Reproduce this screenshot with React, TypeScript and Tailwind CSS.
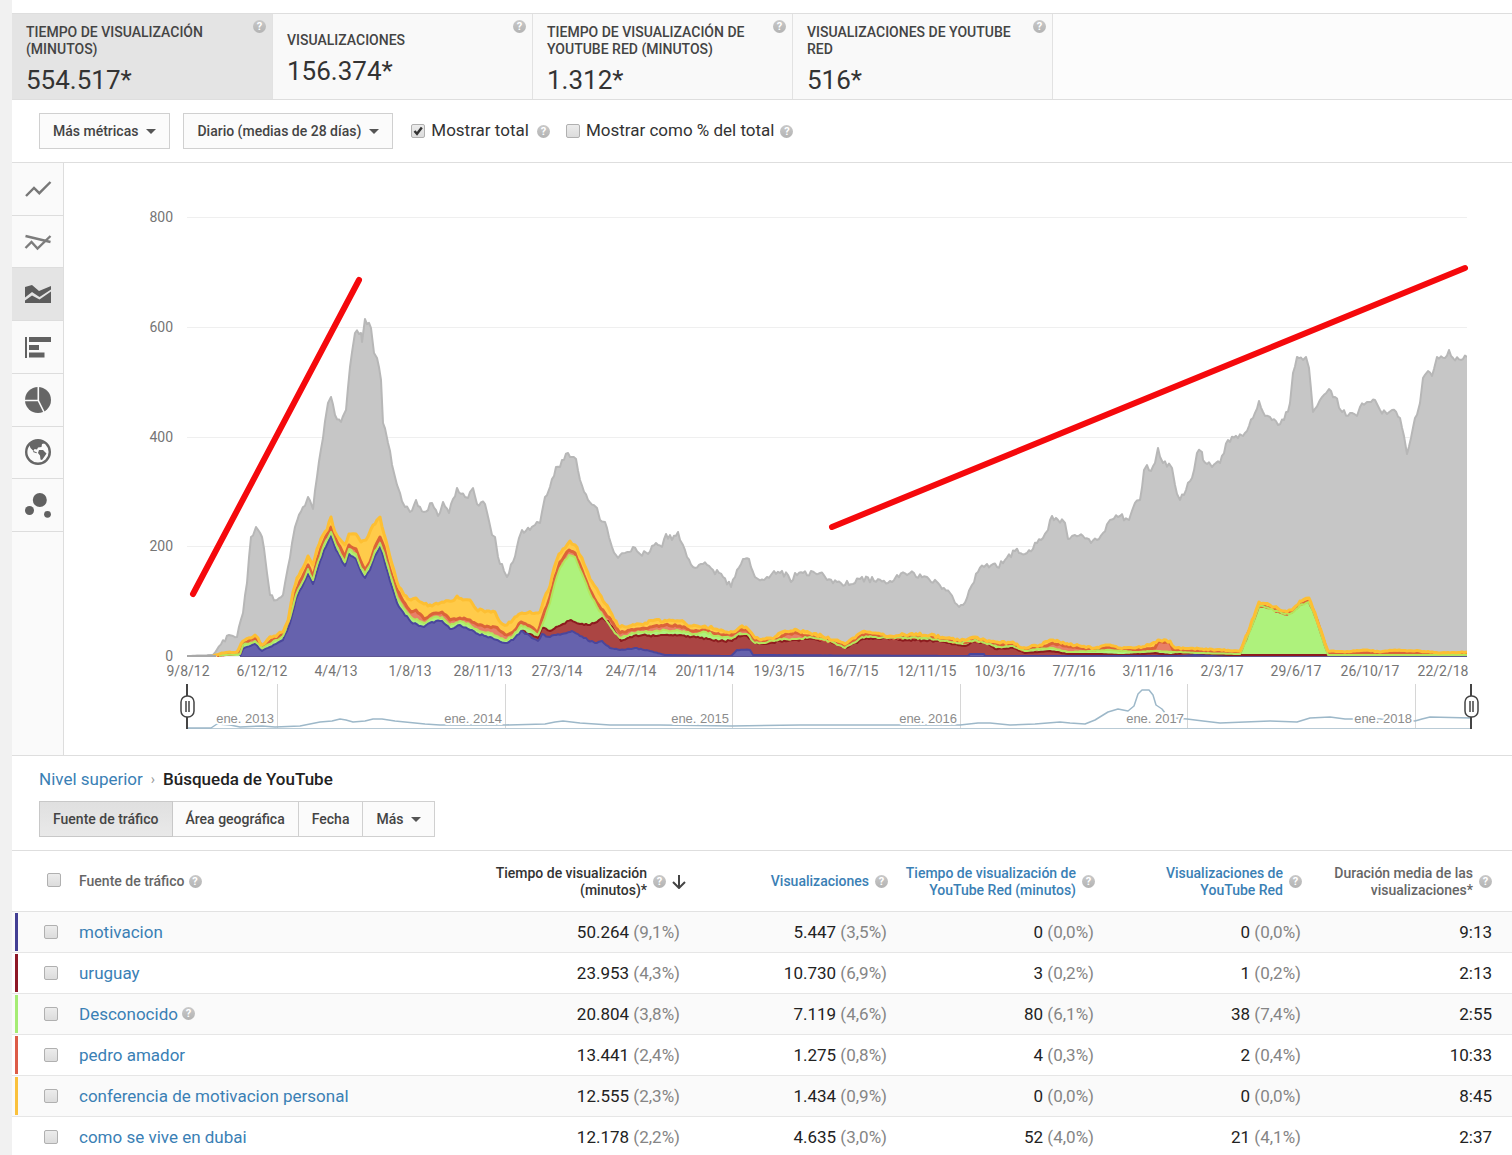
import React from "react";

type Point = [number, number];

const BASE = 656;

function parse(text: string): Point[] {
  return text
    .trim()
    .split(/\s+/)
    .map((pair) => pair.split(",").map(Number) as Point);
}

/* Daily readings wobble a little around the trend; the wobble is deterministic. */
function wobble(points: Point[], amount: number, seed: number): Point[] {
  let state = seed;
  const next = () => {
    state = (state * 16807) % 2147483647;
    return state / 2147483647 - 0.5;
  };
  const out: Point[] = [];
  for (let i = 0; i < points.length - 1; i++) {
    const [x0, y0] = points[i];
    const [x1, y1] = points[i + 1];
    out.push([x0, y0]);
    for (let x = x0 + 2; x < x1 - 1; x += 2) {
      const y = y0 + ((y1 - y0) * (x - x0)) / (x1 - x0);
      const room = Math.max(0, Math.min(1, (BASE - y) / 14));
      out.push([x, Math.round((y + next() * amount * room) * 10) / 10]);
    }
  }
  out.push(points[points.length - 1]);
  return out;
}

const linePath = (points: Point[]) => "M" + points.map((p) => p.join(",")).join("L");
const areaPath = (points: Point[]) =>
  `${linePath(points)}L${points[points.length - 1][0]},${BASE}L${points[0][0]},${BASE}Z`;

const TOTAL = `187,656 213,655 229,635 237,637 243,613 247,583 251,537 256,527 262,537 267,573 270,595 277,600 283,595
288,567 295,527 303,507 308,497 313,509 317,477 323,438 328,403 331,397 335,415 341,422 346,410 350,367 355,333 361,333
362,342 365,319 371,328 374,353 377,358 381,380 383,423 388,443 395,477 400,493 405,507 410,512 416,500 420,507 424,512
432,503 438,516 443,502 449,513 457,488 465,497 468,498 473,488 477,504 485,504 492,535 495,537 498,557 507,577 513,562
522,530 530,530 535,525 540,523 545,497 550,487 556,467 560,467 562,460 568,453 572,457 576,459 580,480 588,500 597,508
600,520 605,522 612,547 618,558 625,553 633,547 640,554 648,554 656,543 662,547 666,534 672,540 678,532 683,545 687,557
693,567 703,564 713,570 723,577 731,587 737,570 743,559 749,559 753,572 758,579 767,577 774,571 788,575 791,582 795,573
803,573 820,573 827,580 837,582 853,584 860,579 890,581 897,575 910,573 927,577 938,583 950,593 955,603 959,607 967,598
972,585 978,572 987,564 997,567 1005,560 1015,551 1027,553 1037,543 1043,538 1048,530 1052,516 1058,520 1065,523
1068,539 1075,535 1083,536 1091,543 1103,533 1110,520 1120,516 1129,520 1133,508 1140,500 1144,470 1147,465 1151,471
1155,463 1158,448 1163,463 1172,468 1175,485 1180,500 1192,478 1197,453 1202,452 1203,460 1212,467 1220,463 1228,440
1243,436 1253,418 1259,401 1263,412 1270,417 1278,425 1284,420 1290,403 1293,373 1297,357 1306,357 1309,368 1313,412
1320,400 1329,389 1335,397 1342,412 1357,416 1360,407 1367,402 1375,400 1380,410 1387,414 1392,410 1400,418 1407,454
1415,418 1420,403 1423,378 1428,371 1432,376 1437,357 1445,358 1449,350 1453,358 1467,357`;

const YELLOW = `213,656 222,653 237,652 243,641 255,635 258,638 261,645 268,639 283,632 288,621 293,592 297,578 303,568
308,556 313,565 317,549 323,535 327,530 331,517 335,532 345,545 349,534 356,534 361,542 366,540 371,529 377,520 380,517
384,534 390,557 397,582 404,595 411,600 416,598 424,604 432,606 440,603 452,601 457,596 463,600 470,600 476,609 485,612
495,612 501,623 507,625 515,617 522,613 540,612 544,599 550,586 554,568 559,554 567,545 570,541 575,545 582,558 590,579
597,589 603,601 610,611 618,626 625,627 635,625 645,623 655,620 667,621 680,621 690,626 705,626 715,629 725,632 733,632
740,627 746,627 755,638 765,639 775,637 785,631 797,630 810,633 822,636 835,640 845,644 853,638 862,632 875,633 890,636
910,634 930,635 945,638 960,641 975,637 985,640 1000,643 1013,642 1022,648 1040,645 1053,640 1065,644 1080,646 1095,648
1110,645 1120,648 1135,648 1150,645 1158,640 1170,641 1175,648 1200,649 1240,651 1250,627 1259,602 1270,605 1285,611
1292,610 1300,601 1309,598 1315,613 1328,651 1345,652 1367,650 1380,652 1395,650 1420,651 1440,653 1467,652`;

const ORANGE = `217,656 222,655 240,653 243,643 255,638 262,646 283,634 288,622 293,605 296,590 302,578 308,565 313,577
317,560 324,541 331,527 336,540 345,557 349,545 356,549 361,562 365,570 370,562 375,547 380,537 384,547 390,570 397,590
403,601 411,612 416,610 424,619 432,614 442,612 450,620 460,618 470,620 478,625 485,627 495,627 507,635 513,632 521,622
530,626 538,632 545,610 550,597 555,577 560,562 565,555 569,550 575,553 582,570 590,590 597,603 605,613 613,623 620,633
630,630 640,629 655,626 665,625 680,626 692,631 706,630 716,634 732,635 740,630 747,630 755,640 765,641 780,638 786,634
797,633 808,636 822,639 835,643 845,646 853,641 862,635 875,635 890,638 910,637 930,637 945,640 960,643 975,640 985,642
1000,645 1013,645 1022,650 1040,648 1053,643 1065,646 1080,648 1095,650 1110,647 1120,650 1135,650 1155,648 1158,642
1170,643 1173,650 1200,651 1240,653 1250,629 1259,605 1270,608 1285,614 1292,612 1300,604 1309,601 1315,615 1328,653
1400,653 1420,653 1467,654`;

const GREEN = `219,656 222,655 240,654 243,645 255,641 262,648 283,636 290,618 296,595 302,583 308,569 313,580 318,562
324,545 331,532 336,545 345,562 349,549 356,554 361,568 365,574 370,565 375,551 380,543 384,553 390,574 397,597 403,607
411,617 424,623 432,618 442,617 450,625 460,621 470,625 478,630 490,633 505,640 513,636 521,625 530,629 538,635 545,618
550,603 555,583 560,568 565,560 569,555 575,557 582,574 590,594 597,607 605,619 613,630 620,638 630,634 640,632 655,631
665,630 680,631 695,634 706,632 716,636 732,638 740,633 747,634 755,643 765,643 780,639 797,639 810,637 822,639 835,643
845,648 853,643 862,637 885,637 910,638 930,638 945,641 960,643 975,640 985,643 1000,647 1013,646 1025,651 1040,649
1053,648 1068,652 1090,651 1110,650 1135,652 1155,651 1175,652 1200,653 1240,654 1250,631 1259,606 1270,609 1285,614
1292,613 1300,605 1309,602 1315,616 1328,655 1400,655 1467,655`;

const RED = `521,631 530,634 538,638 542,628 550,631 556,627
563,624 571,620 580,624 590,625 597,622 602,618 608,621 615,632 621,641 630,637 643,635 655,636 665,635 680,635 700,638
720,641 732,641 738,636 747,636 755,643 765,644 780,641 797,640 808,639 830,641 845,648 855,643 865,639 885,638 905,640
935,641 950,643 965,646 972,642 985,642 995,649 1013,648 1025,653 1050,651 1068,654 1100,654 1120,655 1142,654 1155,653
1170,655 1185,653 1200,655 1240,655 1328,655 1345,657 1380,657 1392,655 1402,656 1410,657 1467,657`;

const BLUE = `240,656 243,649 255,644 262,651 283,640 290,623 296,599 302,587 308,574 313,584 318,568 324,550 331,536
336,550 345,566 349,554 356,559 361,572 365,578 370,570 375,556 380,547 384,559 390,581 397,603 403,612 411,622 424,627
432,622 442,621 450,629 460,625 470,630 478,634 490,637 505,643 513,640 521,631 530,636 538,641 542,634 550,637 556,635
562,634 572,631 580,636 595,643 602,641 610,648 620,650 635,648 650,651 665,655 731,656 737,650 750,650 753,655 968,656
970,654 984,654 985,656 1185,656 1195,655 1210,656 1230,657 1460,657 1467,655`;

const OVERVIEW = `187,728 211,728 217,724 230,725 240,727 262,726 275,727 300,726 320,722 332,721 340,719 346,720 353,722
365,721 373,719 382,719 395,721 425,724 440,725 480,725 505,725 545,724 555,722 563,721 580,723 610,725 660,725 732,726
800,725 880,725 960,725 978,723 990,723 1010,725 1035,724 1060,722 1070,723 1085,724 1095,720 1108,712 1118,709 1128,711
1134,706 1138,694 1142,690 1149,690 1153,695 1156,705 1162,709 1165,713 1175,718 1187,719 1203,721 1220,723 1270,721
1297,722 1310,718 1330,717 1345,719 1380,719 1405,720 1415,721 1422,719 1430,717 1471,718`;

const SERIES = [
  { name: "total", data: TOTAL, fill: "#c6c6c6", line: "#b7b7b7", width: 2, amount: 6, order: 0 },
  { name: "conferencia", data: YELLOW, fill: "#ffcb4a", line: "#fdbf33", width: 3, amount: 3, order: 5 },
  { name: "pedro", data: ORANGE, fill: "#e97f66", line: "#dc6437", width: 3, amount: 2, order: 3 },
  { name: "desconocido", data: GREEN, fill: "#aef27c", line: "#b4e65c", width: 2, amount: 2, order: 4 },
  { name: "uruguay", data: RED, fill: "#ab4543", line: "#8c1b1e", width: 2, amount: 2, order: 1 },
  { name: "motivacion", data: BLUE, fill: "#6662ad", line: "#4a469c", width: 2, amount: 2, order: 2 },
].map((s, i) => ({ ...s, points: wobble(parse(s.data), s.amount, 97 + i * 31) }));

const OUTLINES = [...SERIES].sort((a, b) => a.order - b.order);

const Y_TICKS = [
  { y: 217, label: "800" },
  { y: 327, label: "600" },
  { y: 437, label: "400" },
  { y: 546, label: "200" },
  { y: 656, label: "0" },
];

const X_TICKS = [
  "9/8/12", "6/12/12", "4/4/13", "1/8/13", "28/11/13", "27/3/14", "24/7/14", "20/11/14", "19/3/15",
  "16/7/15", "12/11/15", "10/3/16", "7/7/16", "3/11/16", "2/3/17", "29/6/17", "26/10/17", "22/2/18",
];

const YEARS = [
  { x: 277, label: "ene. 2013" },
  { x: 505, label: "ene. 2014" },
  { x: 732, label: "ene. 2015" },
  { x: 960, label: "ene. 2016" },
  { x: 1187, label: "ene. 2017" },
  { x: 1415, label: "ene. 2018" },
];

function Chart() {
  return (
    <svg viewBox="64 163 1448 592" className="block w-full" role="img" aria-label="Tiempo de visualización por día">
      {Y_TICKS.map((t) => (
        <g key={t.label}>
          <path d={`M187,${t.y}.5H1467`} stroke="#efefef" />
          <text x="173" y={t.y + 5} textAnchor="end" className="fill-[#757575] text-sm">
            {t.label}
          </text>
        </g>
      ))}
      {SERIES.map((s) => (
        <path key={s.name} d={areaPath(s.points)} fill={s.fill} />
      ))}
      <clipPath id="plot">
        <rect x="187" y="163" width="1280" height="494" />
      </clipPath>
      <g clipPath="url(#plot)" fill="none" strokeLinejoin="round">
        {OUTLINES.map((s) => (
          <path key={s.name} d={linePath(s.points)} stroke={s.line} strokeWidth={s.width} />
        ))}
      </g>
      <path d="M187,656H216" stroke="#a8a8a8" strokeWidth="2" />
      <path d="M240,656.5H1467" stroke="#5d5590" strokeWidth="1" />
      <g stroke="#f5090c" strokeWidth="6" strokeLinecap="round">
        <path d="M193,594L359,280" />
        <path d="M832,527L1465,268" />
      </g>
      {X_TICKS.map((label, i) => (
        <text key={label} x={188 + Math.round(i * 73.85)} y="676" textAnchor="middle" className="fill-[#757575] text-sm">
          {label}
        </text>
      ))}
      <path d="M187,728.5H1471" stroke="#b9cbd6" />
      {YEARS.map((t) => (
        <path key={t.x} d={`M${t.x}.5,684V728`} stroke="#d6d6d6" />
      ))}
      <path d={linePath(parse(OVERVIEW))} fill="none" stroke="#9db8c9" strokeWidth="1.5" strokeLinejoin="round" />
      {YEARS.map((t) => (
        <text
          key={t.label}
          x={t.x - 3}
          y="723"
          textAnchor="end"
          stroke="#ffffff"
          strokeWidth="4"
          paintOrder="stroke"
          className="fill-[#8c8c8c] font-['Liberation_Sans',sans-serif] text-[13px]"
        >
          {t.label}
        </text>
      ))}
      {[187, 1471].map((x) => (
        <g key={x} fill="none" stroke="#444444">
          <path d={`M${x},684V729`} strokeWidth="2" />
          <rect x={x - 6} y="696" width="13" height="21" rx="6" fill="#ffffff" strokeWidth="1.5" />
          <path d={`M${x - 1},701V712M${x + 2},701V712`} strokeWidth="1.5" />
        </g>
      ))}
    </svg>
  );
}

function Help({ className = "" }: { className?: string }) {
  return (
    <span
      role="img"
      aria-label="Ayuda"
      className={`inline-flex size-[13px] shrink-0 items-center justify-center rounded-full bg-linear-to-b from-[#c9c9c9] to-[#b3b3b3] text-[11px] leading-none font-bold text-white ${className}`}
    >
      ?
    </span>
  );
}

function Caret() {
  return (
    <svg viewBox="0 0 10 5" className="h-[5px] w-[10px] fill-[#555555]" aria-hidden="true">
      <path d="M0,0H10L5,5Z" />
    </svg>
  );
}

function Check({ label, id, checked = false }: { label?: string; id?: string; checked?: boolean }) {
  return (
    <span className="relative inline-flex size-[14px] shrink-0">
      <input
        type="checkbox"
        id={id}
        aria-label={label}
        defaultChecked={checked}
        className="peer size-[14px] appearance-none rounded-[2px] border border-[#b0b0b0] bg-linear-to-b from-[#ececec] to-[#dcdcdc]"
      />
      <svg
        viewBox="0 0 14 14"
        className="pointer-events-none absolute inset-0 hidden size-[14px] peer-checked:block"
        aria-hidden="true"
      >
        <path d="M3.5,7L6,9.8L10.8,3.6" fill="none" stroke="#333333" strokeWidth="2.4" />
      </svg>
    </span>
  );
}

const METRICS = [
  { title: "TIEMPO DE VISUALIZACIÓN (MINUTOS)", value: "554.517*", active: true },
  { title: "VISUALIZACIONES", value: "156.374*", active: false },
  { title: "TIEMPO DE VISUALIZACIÓN DE YOUTUBE RED (MINUTOS)", value: "1.312*", active: false },
  { title: "VISUALIZACIONES DE YOUTUBE RED", value: "516*", active: false },
];

function Metrics() {
  return (
    <section className="flex border-y border-[#dedede] bg-[#fcfcfc]">
      {METRICS.map((m, i) => (
        <button
          key={m.title}
          className={`flex h-[85px] items-center justify-between border-r border-[#e2e2e2] pr-1.5 pl-3.5 text-left ${
            i === 0 ? "w-[261px]" : "w-[260px]"
          } ${m.active ? "bg-[#e4e4e4]" : "bg-[#f9f9f9]"}`}
        >
          <span className="w-[212px] pt-1.5">
            <span className="block text-sm leading-[17px] font-medium text-[#444444]">{m.title}</span>
            <span className="mt-1.5 block text-[26px] leading-8 text-[#333333]">{m.value}</span>
          </span>
          <Help className="mt-1.5 self-start" />
        </button>
      ))}
    </section>
  );
}

const outlined =
  "flex h-9 items-center gap-2 border border-[#d0d0d0] bg-[#fbfbfb] px-[13px] text-sm font-medium text-[#444444]";

function Controls() {
  return (
    <section className="flex h-[63px] items-center border-b border-[#dedede] pl-[27px]">
      <button className={outlined}>
        Más métricas <Caret />
      </button>
      <button className={`${outlined} ml-[13px]`}>
        Diario (medias de 28 días) <Caret />
      </button>
      <span className="ml-[18px] flex items-center">
        <Check id="show-total" checked />
        <label htmlFor="show-total" className="mr-2 ml-1.5 text-[17px] text-[#333333]">
          Mostrar total
        </label>
        <Help />
      </span>
      <span className="ml-4 flex items-center">
        <Check id="show-percent" />
        <label htmlFor="show-percent" className="mr-1.5 ml-1.5 text-[17px] text-[#333333]">
          Mostrar como % del total
        </label>
        <Help />
      </span>
    </section>
  );
}

const CHART_TYPES = [
  {
    name: "Líneas",
    icon: <path d="M-12,7L-4,-1L1.3,4.2L12.5,-7" fill="none" stroke="#777777" strokeWidth="2.4" />,
  },
  {
    name: "Varias líneas",
    icon: (
      <g fill="none" stroke="#7c7c7c" strokeWidth="2.4">
        <path d="M-12.5,-6L12.5,0" />
        <path d="M-12.5,6L-6.5,0L-0.5,6.5L12.5,-6" />
      </g>
    ),
  },
  {
    name: "Áreas",
    icon: (
      <g fill="#5c5c5c">
        <path d="M-13,-7L-6,-9L1,-3L13,-8V-4.5L1.5,3L-6,-2L-13,3.5Z" />
        <path d="M-13,6.5L-6,1.5L1.5,5.5L13,-2.5V9H-13Z" />
      </g>
    ),
  },
  {
    name: "Barras",
    icon: <path d="M-13,-10H-11V11H-13ZM-9,-10H13V-5H-9ZM-9,-2H1V3H-9ZM-9,5.5H6.5V10.5H-9Z" fill="#616161" />,
  },
  {
    name: "Circular",
    icon: (
      <g>
        <circle r="13" fill="#666666" />
        <path d="M0.3,-13V0.5L6,12M0.3,0.5H-13" fill="none" stroke="#fafafa" strokeWidth="1.6" />
      </g>
    ),
  },
  {
    name: "Mapa",
    icon: (
      <g>
        <circle r="11.8" fill="none" stroke="#666666" strokeWidth="2.4" />
        <path
          d="M-9,-8L-4,-11.5L2,-12L8,-9L4,-8L3.5,-5L0,-4.5L-1,-2.5L-3.5,-3L-4.5,-1L-7.5,-4ZM1,-2L5,-2L8.5,1.5L6.5,4.5L4,8L2.5,7.5L2,3.5L0,1ZM-4.5,-1L-1,0.5L-1.5,1.2L-5,0Z"
          fill="#666666"
        />
      </g>
    ),
  },
  {
    name: "Burbujas",
    icon: (
      <g fill="#616161">
        <circle cx="1.8" cy="-5" r="7" />
        <circle cx="-8.5" cy="5.5" r="4.5" />
        <circle cx="9.5" cy="9.3" r="3.4" />
      </g>
    ),
  },
];

function ChartTypes() {
  return (
    <nav className="w-[52px] shrink-0 border-r border-[#dddddd] bg-[#fafafa]" aria-label="Tipo de gráfico">
      <div className="grid h-[369px] grid-rows-7">
        {CHART_TYPES.map((t) => (
          <button
            key={t.name}
            aria-label={t.name}
            className={`flex items-center justify-center border-b border-[#dddddd] ${t.name === "Áreas" ? "bg-[#e4e4e4]" : ""}`}
          >
            <svg viewBox="-14 -14 28 28" className="size-7">
              {t.icon}
            </svg>
          </button>
        ))}
      </div>
    </nav>
  );
}

function Breadcrumb() {
  return (
    <section className="border-y border-[#dedede] pt-3 pb-[13px] pl-[27px]">
      <p className="flex items-center text-[17px] leading-[22px]">
        <a href="#top" className="text-[#3a80b5]">
          Nivel superior
        </a>
        <span className="mx-2 text-sm text-[#999999]">›</span>
        <span className="font-medium text-[#222222]">Búsqueda de YouTube</span>
      </p>
      <div className="mt-[11px] flex">
        <button className="h-9 border border-[#c8c8c8] bg-linear-to-b from-[#e0e0e0] to-[#e9e9e9] px-[13px] text-sm font-medium text-[#444444]">
          Fuente de tráfico
        </button>
        <button className={`${outlined} border-l-0`}>Área geográfica</button>
        <button className={`${outlined} border-l-0`}>Fecha</button>
        <button className={`${outlined} border-l-0`}>
          Más <Caret />
        </button>
      </div>
    </section>
  );
}

const ROWS = [
  { bar: "bg-[#433f94]", name: "motivacion", cells: ["50.264 9,1", "5.447 3,5", "0 0,0", "0 0,0"], time: "9:13" },
  { bar: "bg-[#8e1826]", name: "uruguay", cells: ["23.953 4,3", "10.730 6,9", "3 0,2", "1 0,2"], time: "2:13" },
  { bar: "bg-[#a5ec74]", name: "Desconocido", cells: ["20.804 3,8", "7.119 4,6", "80 6,1", "38 7,4"], time: "2:55" },
  { bar: "bg-[#dd5c48]", name: "pedro amador", cells: ["13.441 2,4", "1.275 0,8", "4 0,3", "2 0,4"], time: "10:33" },
  {
    bar: "bg-[#fac13c]",
    name: "conferencia de motivacion personal",
    cells: ["12.555 2,3", "1.434 0,9", "0 0,0", "0 0,0"],
    time: "8:45",
  },
  { bar: "", name: "como se vive en dubai", cells: ["12.178 2,2", "4.635 3,0", "52 4,0", "21 4,1"], time: "2:37" },
];

const HEADS = [
  { lines: ["Visualizaciones"] },
  { lines: ["Tiempo de visualización de", "YouTube Red (minutos)"] },
  { lines: ["Visualizaciones de", "YouTube Red"] },
];

function Lines({ lines }: { lines: string[] }) {
  return (
    <>
      {lines.map((l) => (
        <span key={l} className="block whitespace-nowrap">
          {l}
        </span>
      ))}
    </>
  );
}

function TrafficTable() {
  return (
    <table className="w-full table-fixed border-collapse">
      <colgroup>
        <col className="w-[67px]" />
        <col />
        <col className="w-[207px]" />
        <col className="w-[207px]" />
        <col className="w-[207px]" />
        <col className="w-[207px]" />
        <col className="w-[198px]" />
      </colgroup>
      <thead>
        <tr className="h-[60px] border-b border-[#e2e2e2] text-sm leading-[17px] font-medium text-[#666666]">
          <th className="pt-0.5 pl-[35px] text-left">
            <Check label="Seleccionar todo" />
          </th>
          <th className="pt-0.5 text-left font-medium">
            <span className="flex items-center gap-1">
              Fuente de tráfico <Help />
            </span>
          </th>
          <th className="pt-0.5 pr-[7px] font-medium text-[#333333]">
            <span className="flex items-center justify-end">
              <button className="text-right">
                <Lines lines={["Tiempo de visualización", "(minutos)*"]} />
              </button>
              <Help className="mr-1.5 ml-1.5" />
              <svg viewBox="0 0 14 14" className="size-[14px]" fill="none" stroke="#444444" strokeWidth="2" aria-hidden="true">
                <path d="M7,0V12.5M1,7L7,13L13,7" />
              </svg>
            </span>
          </th>
          {HEADS.map((h) => (
            <th key={h.lines[0]} className="pt-0.5 pr-3 font-medium text-[#3a80b5]">
              <span className="flex items-center justify-end gap-1.5">
                <button className="text-right">
                  <Lines lines={h.lines} />
                </button>
                <Help />
              </span>
            </th>
          ))}
          <th className="pt-0.5 pr-5 font-medium">
            <span className="flex items-center justify-end gap-1.5">
              <span className="text-right">
                <Lines lines={["Duración media de las", "visualizaciones*"]} />
              </span>
              <Help />
            </span>
          </th>
        </tr>
      </thead>
      <tbody>
        {ROWS.map((r) => (
          <tr key={r.name} className="h-[41px] border-b border-[#e6e6e6] text-[17px] leading-6 odd:bg-[#fafafa]">
            <td className="p-0 pl-[3px]">
              <span className="flex items-center">
                <span className={`mr-[26px] h-[38px] w-[3px] ${r.bar}`} />
                <Check label={`Seleccionar ${r.name}`} />
              </span>
            </td>
            <td className="p-0">
              <span className="flex items-center gap-1 whitespace-nowrap">
                <a href="#detail" className="text-[#3a80b5]">
                  {r.name}
                </a>
                {r.name === "Desconocido" && <Help />}
              </span>
            </td>
            {r.cells.map((c, i) => {
              const [value, share] = c.split(" ");
              return (
                <td key={i} className="p-0 pr-[13px] text-right text-[#222222]">
                  {value} <span className="text-[#858585]">({share}%)</span>
                </td>
              );
            })}
            <td className="p-0 pr-5 text-right text-[#222222]">{r.time}</td>
          </tr>
        ))}
      </tbody>
    </table>
  );
}

export default function App() {
  return (
    <div className="h-screen overflow-hidden bg-[#f1f1f1] pl-3 font-[Roboto,sans-serif]">
      <main className="min-h-screen bg-white pt-[13px]">
        <Metrics />
        <Controls />
        <section className="flex">
          <ChartTypes />
          <div className="min-w-0 flex-1">
            <Chart />
          </div>
        </section>
        <Breadcrumb />
        <TrafficTable />
      </main>
    </div>
  );
}
